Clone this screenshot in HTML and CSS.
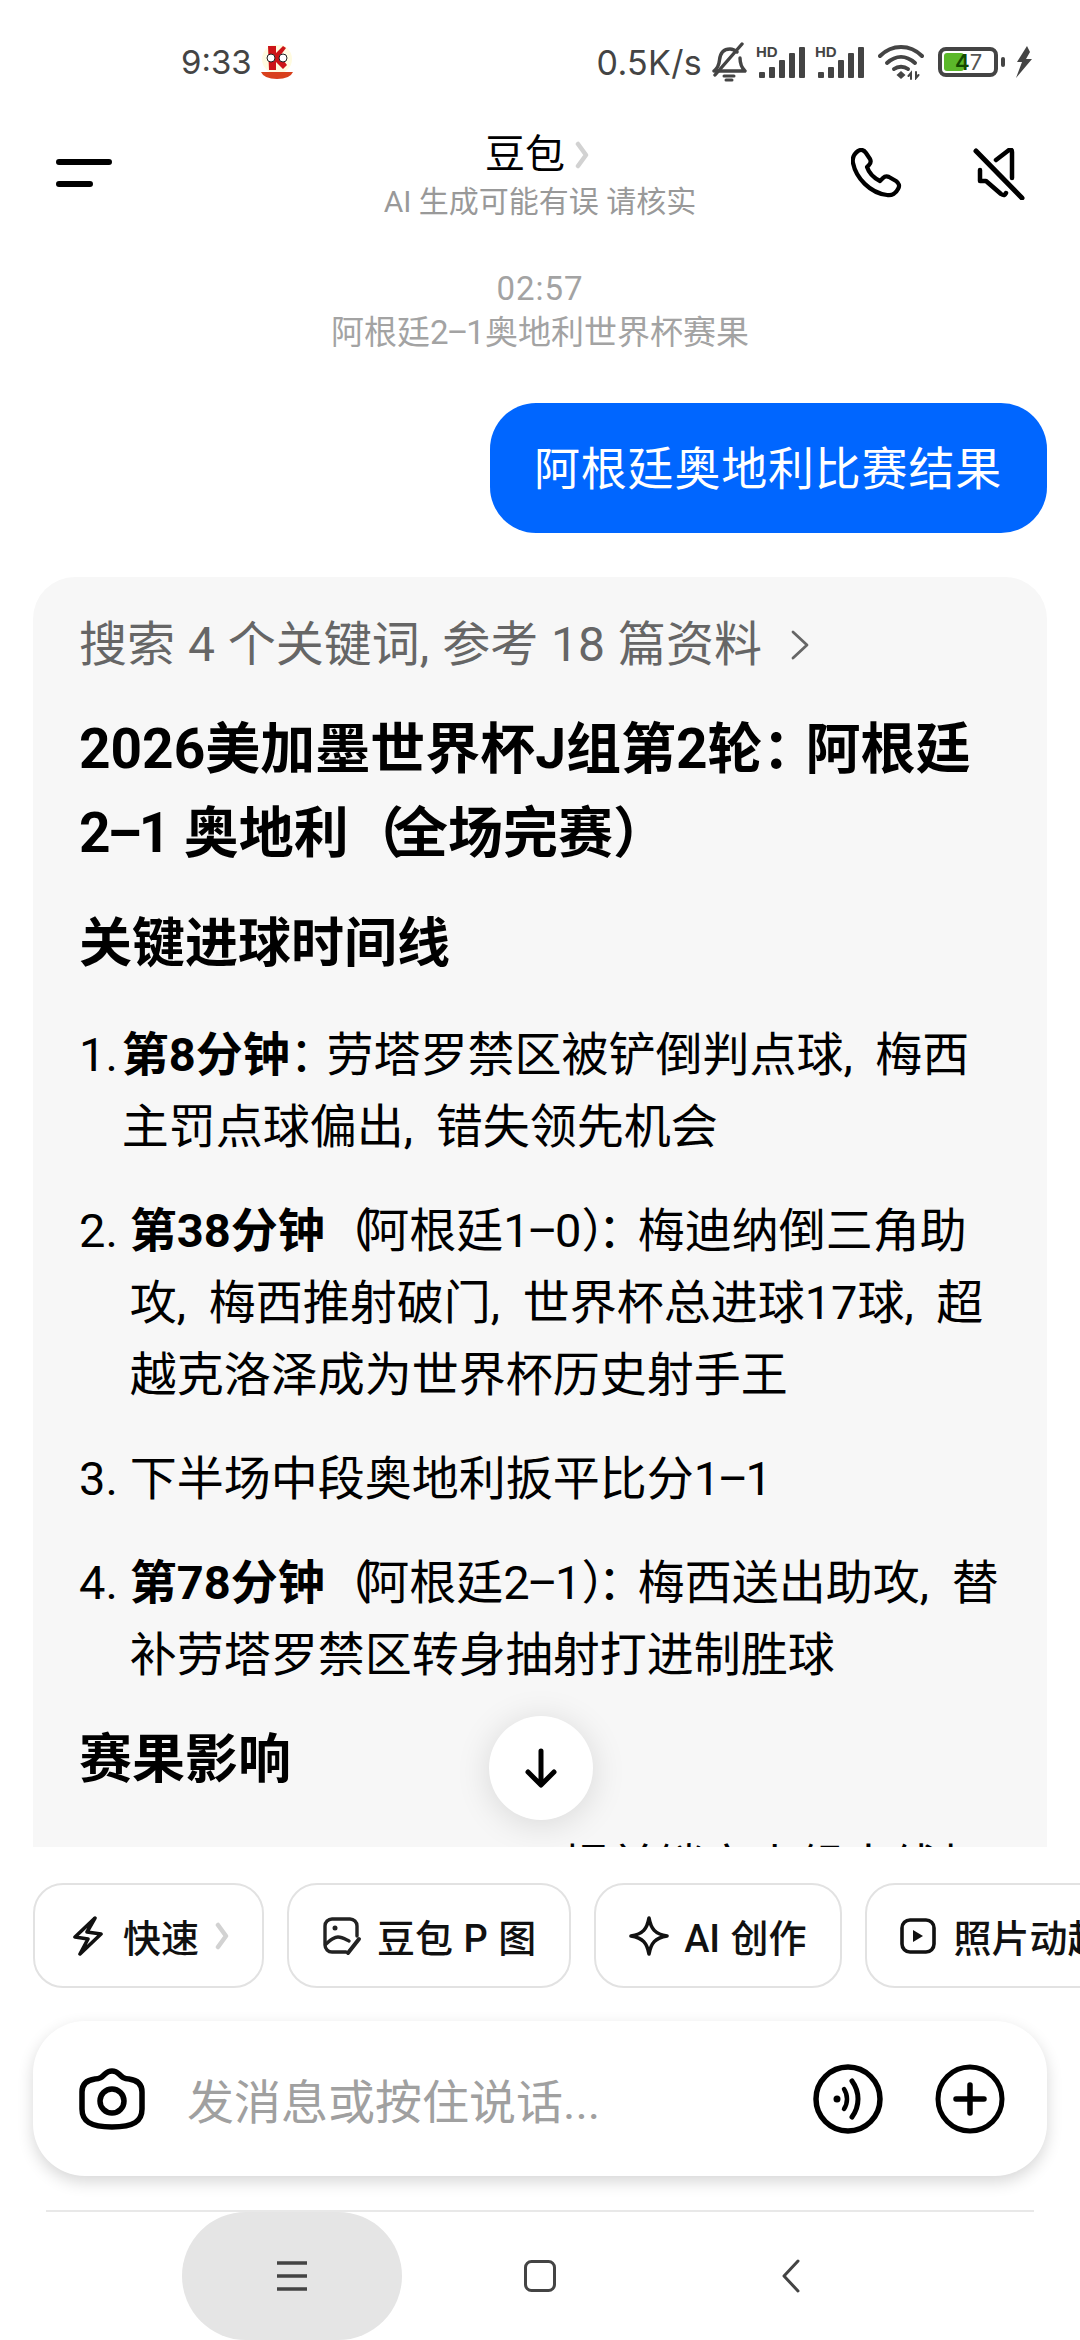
FILE: index.html
```html
<!DOCTYPE html>
<html lang="zh-CN">
<head>
<meta charset="utf-8">
<title>豆包</title>
<link rel="stylesheet" href="styles.css">
</head>
<body>
<div class="screen">
  <div class="statusbar">
    <div class="status-left">
      <span class="clock">9:33</span>
      <svg class="app-badge" viewBox="0 0 34 34" width="34" height="34">
        <circle cx="17" cy="14" r="15" fill="#fffbe0"/>
        <path d="M8 1h8v7l7-7 3 2-6 8 7 9-4 4-7-7v8H9z" fill="#cc1418"/>
        <circle cx="11" cy="13" r="4" fill="#fff" stroke="#222" stroke-width="1"/>
        <circle cx="23" cy="13" r="4" fill="#fff" stroke="#222" stroke-width="1"/>
        <path d="M1 27h32q-3 7-16 7T1 27z" fill="#d8401c"/>
      </svg>
    </div>
    <div class="status-right">
      <span class="speed">0.5K/s</span>
      <svg class="st-bell" viewBox="0 0 36 40" width="36" height="40" fill="none" stroke="#444" stroke-width="3.400" stroke-linecap="round" stroke-linejoin="round">
        <path d="M3 29c4-3 5-6 5.500-11C9.200 11 13 7 19 7c3 0 5 1 7 3M29 16c0 5 1 9 5 13H3"/>
        <path d="M4 33 31 2"/>
        <path d="M13 34h10M15 38h6" stroke-width="3"/>
      </svg>
      <svg class="st-signal" viewBox="0 0 50 32" width="50" height="32">
        <text x="0" y="11" class="hd">HD</text>
        <g fill="#444"><rect x="3" y="26" width="6" height="6" rx="1"/><rect x="13" y="21" width="6" height="11" rx="1"/><rect x="23" y="14" width="6" height="18" rx="1"/><rect x="33" y="7" width="6" height="25" rx="1"/><rect x="43" y="1" width="6" height="31" rx="1"/></g>
      </svg>
      <svg class="st-signal" viewBox="0 0 50 32" width="50" height="32">
        <text x="0" y="11" class="hd">HD</text>
        <g fill="#444"><rect x="3" y="26" width="6" height="6" rx="1"/><rect x="13" y="21" width="6" height="11" rx="1"/><rect x="23" y="14" width="6" height="18" rx="1"/><rect x="33" y="7" width="6" height="25" rx="1"/><rect x="43" y="1" width="6" height="31" rx="1"/></g>
      </svg>
      <svg class="st-wifi" viewBox="0 0 46 36" width="46" height="36" fill="none" stroke="#444" stroke-width="4" stroke-linecap="round">
        <path d="M2 12C14 0 32 0 44 12"/>
        <path d="M9 19c9-8 19-8 28 0"/>
        <path d="M16 25c4-3 10-3 14 0"/>
        <path d="m23 27 4.500 4-4.500 4-4.500-4z" fill="#444" stroke="none"/>
        <path d="M33 35v-6l-2.500 3M38 28v6l2.500-3" stroke-width="2"/>
      </svg>
      <div class="battery">
        <div class="battery-body">
          <div class="battery-fill"></div>
          <span class="battery-num"><b>4</b>7</span>
        </div>
        <div class="battery-cap"></div>
      </div>
      <svg class="st-bolt" viewBox="0 0 18 32" width="18" height="32"><path d="M12 0 2 16h5L1 32 17 13h-6l4-7z" fill="#444"/></svg>
    </div>
  </div>

  <header class="topbar">
    <svg class="menu-icon" viewBox="0 0 56 30" width="56" height="30" fill="none" stroke="#000" stroke-width="6" stroke-linecap="round">
      <path d="M3 4h50M3 26h31"/>
    </svg>
    <div class="title-box">
      <div class="title"><span>豆包</span>
        <svg class="title-arrow" viewBox="0 0 14 28" width="14" height="28" fill="none" stroke="#d2d2d2" stroke-width="4.500" stroke-linecap="round" stroke-linejoin="round"><path d="m3 3 8 11-8 11"/></svg>
      </div>
      <div class="subtitle">AI 生成可能有误 请核实</div>
    </div>
    <div class="top-actions">
      <svg viewBox="0 0 52 52" width="52" height="52" fill="none" stroke="#000" stroke-width="4.200" stroke-linejoin="round">
        <path d="M7 3c3-2 6-1 8 2l4 6c1 2 1 4-1 6l-2 2c2 6 7 11 13 14l3-3c2-2 4-2 6-1l7 4c3 2 4 5 2 8-2 4-6 7-11 6C19 45 5 30 2 15 1 10 3 6 7 3z"/>
      </svg>
      <svg viewBox="0 0 52 52" width="52" height="52" fill="none" stroke="#000" stroke-linecap="round" stroke-linejoin="round">
        <path d="m3 3 46 47" stroke-width="5"/>
        <path d="M23 12 36 2c2-1 3 0 3 2v26M7 22v11h6l15 13c3 2 4 1 5-1" stroke-width="4.500"/>
      </svg>
    </div>
  </header>

  <main class="chat">
    <div class="stamp">
      <div class="stamp-time">02:57</div>
      <div class="stamp-title">阿根廷2<span class="dash">–</span>1奥地利世界杯赛果</div>
    </div>
    <div class="bubble-row"><div class="bubble">阿根廷奥地利比赛结果</div></div>
    <article class="answer">
      <div class="refs"><span>搜索 4 个关键词, 参考 18 篇资料</span>
        <svg viewBox="0 0 20 36" width="20" height="36" fill="none" stroke="#666" stroke-width="2.800" stroke-linecap="round" stroke-linejoin="round"><path d="m3 5 14 13L3 31"/></svg>
      </div>
      <h1 class="a-title">2026美加墨世界杯J组第2轮<span class="pn">：</span>阿根廷<br>2<span class="dash">–</span>1 奥地利<span class="po">（</span>全场完赛）</h1>
      <h2 class="a-head">关键进球时间线</h2>
      <ol class="timeline">
        <li><span class="num">1.</span><div><b>第8分钟</b><span class="pn">：</span>劳塔罗禁区被铲倒判点球, 梅西主罚点球偏出, 错失领先机会</div></li>
        <li><span class="num">2.</span><div><b>第38分钟</b><span class="po">（</span>阿根廷1<span class="dash">–</span>0<span class="pc">）：</span>梅迪纳倒三角助攻, 梅西推射破门, 世界杯总进球17球, 超越克洛泽成为世界杯历史射手王</div></li>
        <li><span class="num">3.</span><div>下半场中段奥地利扳平比分1<span class="dash">–</span>1</div></li>
        <li><span class="num">4.</span><div><b>第78分钟</b><span class="po">（</span>阿根廷2<span class="dash">–</span>1<span class="pc">）：</span>梅西送出助攻, 替补劳塔罗禁区转身抽射打进制胜球</div></li>
      </ol>
      <h2 class="a-head">赛果影响</h2>
      <p class="a-next">提前锁定小组出线权</p>
    </article>
    <button class="scroll-down" type="button" aria-label="到底部">
      <svg viewBox="0 0 36 40" width="36" height="40" fill="none" stroke="#000" stroke-width="5" stroke-linecap="round" stroke-linejoin="round"><path d="M18 3v33M5 24l13 13 13-13"/></svg>
    </button>
  </main>

  <div class="chips">
    <div class="chip chip-fast">
      <svg viewBox="0 0 30 40" width="30" height="40" fill="none" stroke="#111" stroke-width="3.600" stroke-linejoin="round"><path d="M22 2 2 21l13 2-8 15 21-20-14-2z"/></svg>
      <span>快速</span>
      <svg class="chip-arrow" viewBox="0 0 14 28" width="14" height="28" fill="none" stroke="#d2d2d2" stroke-width="4.500" stroke-linecap="round" stroke-linejoin="round"><path d="m3 3 8 11-8 11"/></svg>
    </div>
    <div class="chip">
      <svg viewBox="0 0 40 40" width="40" height="40" fill="none" stroke="#222" stroke-width="3.400" stroke-linecap="round" stroke-linejoin="round"><path d="M24 36H10a7 7 0 0 1-7-7V10a7 7 0 0 1 7-7h18a7 7 0 0 1 7 7v10"/><path d="M4 28c5-5 8-7 12-7 4 0 7 2 11 4"/><circle cx="13" cy="12" r="2.500" fill="#222" stroke="none"/><path d="m37 23-11 14" stroke-width="4"/></svg>
      <span>豆包 P 图</span>
    </div>
    <div class="chip">
      <svg viewBox="0 0 40 40" width="40" height="40" fill="none" stroke="#111" stroke-width="3.600" stroke-linejoin="round"><path d="M20 2c2 11 6 16 18 18-12 2-16 7-18 18-2-11-6-16-18-18 12-2 16-7 18-18z"/></svg>
      <span>AI 创作</span>
    </div>
    <div class="chip chip-last">
      <svg viewBox="0 0 36 36" width="36" height="36" fill="none" stroke="#111" stroke-width="3.600"><rect x="2" y="2" width="32" height="32" rx="8"/><path d="M13 12v12l10-6z" fill="#111" stroke="none"/></svg>
      <span>照片动起来</span>
    </div>
  </div>

  <div class="composer">
    <svg class="camera" viewBox="0 0 66 62" width="66" height="62" fill="none" stroke="#000" stroke-width="5.500" stroke-linejoin="round">
      <path d="M16 11c5 0 7-2 10-5 2-2 4-3 7-3s5 1 7 3c3 3 5 5 10 5 8 1 13 5 13 13v17c0 12-8 18-30 18S3 53 3 41V24c0-8 5-12 13-13z"/>
      <circle cx="33" cy="33" r="12"/>
    </svg>
    <div class="placeholder">发消息或按住说话...</div>
    <svg class="round-btn" viewBox="0 0 70 70" width="70" height="70" fill="none" stroke="#000" stroke-linecap="round">
      <circle cx="35" cy="35" r="32" stroke-width="5.500"/>
      <circle cx="24" cy="35" r="3.500" fill="#000" stroke="none"/>
      <path d="M31 25c4 6 4 14 0 20" stroke-width="4.500"/>
      <path d="M39 17c8 11 8 25 0 36" stroke-width="5"/>
    </svg>
    <svg class="round-btn" viewBox="0 0 70 70" width="70" height="70" fill="none" stroke="#000" stroke-linecap="round">
      <circle cx="35" cy="35" r="32" stroke-width="5"/>
      <path d="M35 21v28M21 35h28" stroke-width="5.500"/>
    </svg>
  </div>

  <nav class="navbar">
    <div class="nav-slot nav-active">
      <svg viewBox="0 0 32 32" width="32" height="32" fill="none" stroke="#444" stroke-width="3.600"><path d="M1 3h30M1 16h30M1 29h30"/></svg>
    </div>
    <div class="nav-slot">
      <svg viewBox="0 0 32 32" width="32" height="32" fill="none" stroke="#444" stroke-width="3"><rect x="1.500" y="1.500" width="29" height="29" rx="6"/></svg>
    </div>
    <div class="nav-slot nav-back">
      <svg viewBox="0 0 20 34" width="20" height="34" fill="none" stroke="#444" stroke-width="3" stroke-linecap="round" stroke-linejoin="round"><path d="M17 2 3 17l14 15"/></svg>
    </div>
  </nav>
</div>
</body>
</html>
```
FILE: styles.css
```css
* { box-sizing: border-box; margin: 0; padding: 0; }

html, body { background: #fff; }

body {
  width: 1080px;
  height: 2340px;
  overflow: hidden;
  font-family: Roboto, "Noto Sans CJK SC", sans-serif;
  color: #000;
}

.screen {
  display: flex;
  flex-direction: column;
  width: 1080px;
  height: 2340px;
}

/* status bar */
.statusbar {
  flex: none;
  display: flex;
  justify-content: space-between;
  align-items: center;
  height: 124px;
  padding: 0 47px 0 181px;
  color: #444;
  font-family: Inter, sans-serif;
}
.status-left, .status-right { display: flex; align-items: center; }
.status-left { gap: 8px; }
.clock { font-size: 33px; }
.speed { font-size: 34px; letter-spacing: 0.300px; margin-right: 9px; }
.status-right svg { flex: none; }
.st-signal { margin-left: 9px; overflow: visible; }
.st-signal + .st-signal { margin-left: 9px; }
.st-wifi { margin-left: 13px; }
.hd { font: 700 15px "Liberation Sans", sans-serif; fill: #444; }
.battery { display: flex; align-items: center; gap: 3px; margin-left: 14px; }
.battery-body {
  position: relative;
  width: 60px;
  height: 30px;
  border: 4px solid #444;
  border-radius: 8px;
}
.battery-fill {
  position: absolute;
  left: 2px; top: 2px; bottom: 2px;
  width: 20px;
  background: #5bb82a;
  border-radius: 3px;
}
.battery-num {
  position: absolute;
  left: 13px; top: -4px;
  font-size: 22px;
  line-height: 30px;
  color: #555;
}
.battery-num b { color: #124a00; font-weight: 600; }
.battery-cap { width: 4px; height: 10px; background: #444; border-radius: 2px; }
.st-bolt { margin-left: 10px; }

/* top bar */
.topbar {
  flex: none;
  display: flex;
  align-items: center;
  justify-content: space-between;
  height: 118px;
  padding: 0 55px 0 56px;
  position: relative;
}
.menu-icon { margin-top: -20px; }
.title-box { position: absolute; left: 0; right: 0; top: 7px; text-align: center; }
.title {
  display: flex;
  justify-content: center;
  align-items: center;
  gap: 10px;
  font-size: 40px;
  line-height: 48px;
  padding-right: 6px;
}
.subtitle { font-size: 30px; line-height: 46px; color: #999; }
.top-actions { display: flex; gap: 70px; margin-top: -18px; }

/* chat */
.chat {
  flex: 1;
  min-height: 0;
  overflow: hidden;
  position: relative;
  padding: 25px 33px 0;
}
.stamp { text-align: center; color: #a3a3a3; font-size: 33px; line-height: 44px; }
.stamp-time { letter-spacing: 1px; }
.dash { margin: 0 -0.06em; }
.bubble-row { display: flex; justify-content: flex-end; margin-top: 48px; }
.bubble {
  background: #0066ff;
  color: #fff;
  font-size: 46px;
  line-height: 60px;
  padding: 36px 45px 34px 44px;
  border-radius: 46px;
  letter-spacing: 0.800px;
}
.answer {
  margin-top: 44px;
  background: #f7f7f7;
  border-radius: 42px;
  padding: 38px 40px 60px 46px;
  height: 1400px;
}
.refs {
  display: flex;
  align-items: center;
  gap: 28px;
  color: #666;
  font-size: 48px;
  line-height: 60px;
  word-spacing: 1px;
}
.a-title { font-size: 55px; font-weight: 700; line-height: 84px; margin-top: 32px; }
.a-head { font-size: 53px; font-weight: 700; line-height: 72px; margin-top: 33px; }

/* full-width punctuation set tighter than the em box */
.pn { letter-spacing: -0.22em; }
.po { letter-spacing: -0.2em; }
.pc { letter-spacing: -0.15em; }
.timeline { list-style: none; margin-top: 39px; font-size: 47px; line-height: 72px; word-spacing: 11px; }
.timeline li { display: flex; gap: 12px; margin-bottom: 32px; }
.timeline li:first-child .num { margin-right: -8px; }
.timeline b { font-weight: 700; }
.num { flex: none; }
.a-next { font-size: 47px; line-height: 72px; margin-top: 35px; padding-left: 484px; }
.scroll-down {
  position: absolute;
  left: 489px;
  top: 1474px;
  width: 104px;
  height: 104px;
  border: 0;
  border-radius: 50%;
  background: #fff;
  display: flex;
  align-items: center;
  justify-content: center;
  box-shadow: 0 4px 34px rgba(0, 0, 0, 0.13);
}

/* quick action chips */
.chips {
  flex: none;
  display: flex;
  gap: 23px;
  padding: 36px 0 0 33px;
  overflow: hidden;
}
.chip {
  flex: none;
  display: flex;
  align-items: center;
  gap: 15px;
  height: 105px;
  padding: 0 33px;
  border: 2px solid #e2e2e2;
  border-radius: 30px;
  font-size: 38px;
  font-weight: 500;
  word-spacing: 1px;
  color: #111;
}
.chip-fast { gap: 20px; padding: 0 33px 0 38px; }
.chip-arrow { margin-left: -4px; }
.chip-last { gap: 18px; }

/* message composer */
.composer {
  flex: none;
  display: flex;
  align-items: center;
  height: 155px;
  margin: 33px 33px 0;
  padding: 0 42px 0 46px;
  background: #fff;
  border-radius: 52px;
  box-shadow: 0 6px 16px rgba(0, 0, 0, 0.16);
}
.camera { flex: none; }
.placeholder { flex: 1; margin-left: 42px; font-size: 47px; color: #a0a0a0; }
.round-btn { flex: none; margin-left: 52px; }

/* system navigation */
.navbar {
  flex: none;
  display: flex;
  justify-content: center;
  align-items: center;
  height: 130px;
  margin: 34px 46px 0;
  border-top: 2px solid #e8e8e8;
  padding-left: 3px;
}
.nav-slot { width: 220px; height: 128px; display: flex; align-items: center; justify-content: center; margin: 0 14px; }
.nav-active { background: #e5e5e5; border-radius: 64px; }
.nav-back { margin-left: 17px; }
```
